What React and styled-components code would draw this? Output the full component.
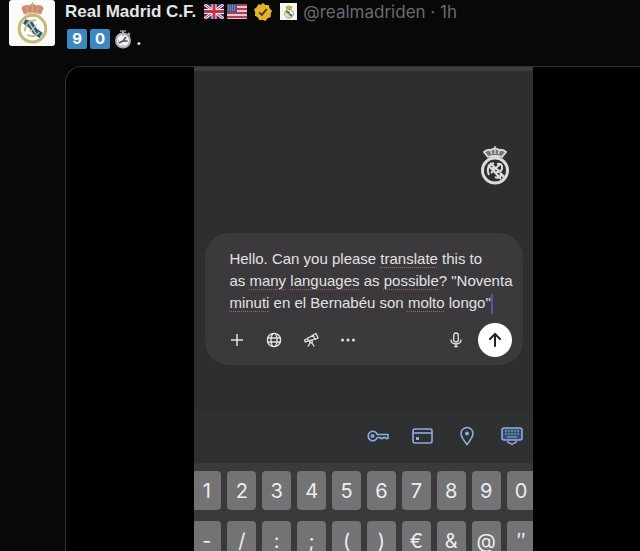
import React from 'react';
import styled, { createGlobalStyle } from 'styled-components';

const GlobalStyle = createGlobalStyle`
  * {
    box-sizing: border-box;
  }

  body {
    margin: 0;
    background: #080808;
    color: #e7e9ea;
    font-family: Inter, 'Liberation Sans', sans-serif;
  }

  button {
    margin: 0;
    padding: 0;
    border: 0;
    background: none;
    color: inherit;
    font-family: inherit;
    cursor: pointer;
  }

  svg {
    display: block;
    flex: none;
  }
`;

const S = {
  Post: styled.article`
    display: flex;
    gap: 10px;
    height: 100vh;
    padding-left: 9px;
    overflow: hidden;
  `,
  Avatar: styled.a`
    display: flex;
    flex: none;
    align-items: center;
    justify-content: center;
    width: 46px;
    height: 46px;
    border-radius: 3px;
    background: #fbfbf8;
  `,
  Body: styled.div`
    display: flex;
    flex: 1;
    flex-direction: column;
    min-width: 0;
    margin-right: -22px;
  `,
  Header: styled.header`
    display: flex;
    align-items: center;
    height: 23px;
    font-size: 17px;
    white-space: nowrap;
  `,
  Name: styled.a`
    color: #e4e5e6;
    font-family: 'Liberation Sans', sans-serif;
    font-weight: 700;
    text-decoration: none;
  `,
  Flags: styled.span`
    display: flex;
    gap: 3px;
    margin: 0 7px 0 8px;
  `,
  Affiliate: styled.span`
    display: flex;
    align-items: center;
    justify-content: center;
    width: 17px;
    height: 17px;
    margin: 0 6px 0 8px;
    background: #f6f6ee;
  `,
  Meta: styled.a`
    color: #686b6f;
    text-decoration: none;
  `,
  Message: styled.div`
    display: flex;
    align-items: center;
    gap: 3px;
    height: 31px;
    margin-bottom: 12px;
    padding-left: 2px;
    font-size: 17px;
    font-weight: 700;
  `,
  Keycap: styled.span`
    display: flex;
    align-items: center;
    justify-content: center;
    width: 20px;
    height: 20px;
    border-radius: 2px;
    background: #3b88c3;
    color: #fff;
    font-size: 15px;
  `,
  Media: styled.div`
    display: flex;
    flex: 1;
    justify-content: center;
    min-height: 0;
    border: 1px solid #2f3336;
    border-bottom: 0;
    border-radius: 16px 16px 0 0;
    background: #000;
    overflow: hidden;
  `,
  Phone: styled.section`
    display: flex;
    flex: 0 0 calc(57% - 1px);
    flex-direction: column;
    border-top: 4px solid #3e3f41;
    background: #2f2d30;
    overflow: hidden;
  `,
  Chat: styled.div`
    display: flex;
    flex: none;
    flex-direction: column;
    padding: 75px 10px 47px 11px;
  `,
  CrestRow: styled.div`
    display: flex;
    justify-content: flex-end;
    margin-bottom: 48px;
    padding-right: 13px;
  `,
  Composer: styled.form`
    padding: 15px 11px 8px 24px;
    border-radius: 24px;
    background: #3b393c;
  `,
  Prompt: styled.div`
    color: #e2e1e3;
    font-family: 'Liberation Sans', sans-serif;
    font-size: 15px;
    line-height: 22px;
    white-space: nowrap;
    outline: none;
  `,
  Typo: styled.span`
    text-decoration: underline dotted #a2626c 1px;
    text-decoration-skip-ink: none;
    text-underline-offset: 3px;
  `,
  Caret: styled.span`
    display: inline-block;
    width: 2px;
    height: 20px;
    background: #5553a8;
    vertical-align: middle;
  `,
  Tools: styled.div`
    display: flex;
    align-items: center;
    gap: 21px;
    margin-top: 9px;
  `,
  Tool: styled.button`
    display: flex;
    align-items: center;
    justify-content: center;
    width: 16px;
    height: 16px;
    margin-left: ${(props) => (props.$end ? 'auto' : '0')};
    color: #e4e3e5;
  `,
  Send: styled.button`
    display: flex;
    align-items: center;
    justify-content: center;
    width: 34px;
    height: 34px;
    margin-left: -7px;
    border-radius: 50%;
    background: #fff;
    color: #202022;
  `,
  Autofill: styled.div`
    display: flex;
    flex: none;
    align-items: center;
    justify-content: flex-end;
    gap: 23px;
    height: 51px;
    padding: 0 10px 4px 0;
    background: #2f3032;
  `,
  Fill: styled.button`
    color: #8caede;
  `,
  Keyboard: styled.div`
    display: grid;
    grid-template-columns: repeat(10, 1fr);
    grid-auto-rows: 39px;
    flex: none;
    gap: 11px 6px;
    margin: 0 -3px 0 -2px;
    padding-top: 8px;
    background: #3a393c;
  `,
  Key: styled.button`
    border-radius: 4px;
    background: #737275;
    color: #ededee;
    font-size: 20px;
    line-height: 20px;
  `,
};

const KEYS = [
  '1', '2', '3', '4', '5', '6', '7', '8', '9', '0',
  '-', '/', ':', ';', '(', ')', '€', '&', '@', '″',
];

const Crest = ({ size, gold, band, fill }) => (
  <svg width={size * 0.72} height={size} viewBox="0 0 36 50" fill="none">
    <path d="M8 14L5 7Q8 2 14 4Q18 0 22 4Q28 2 31 7L28 14Q18 11 8 14Z" fill={fill} />
    <path d="M8 14Q18 11 28 14M18 0V11M11 5L13 12M25 5L23 12" stroke={gold} strokeWidth="1.500" />
    <circle cx="18" cy="31" r="15.500" stroke={gold} strokeWidth="3.500" />
    <path d="M7 25L10 20L18 23L23 31L30 36L26 42L19 37L14 30Z" fill={band} />
    <path d="M9 34Q10 21 22 21M12 38Q20 43 26 35" stroke={gold} strokeWidth="2" />
    <path d="M14 24L22 37M23 26L15 35" stroke="#d9cf9c" strokeWidth="1.500" />
  </svg>
);

const WhiteCrest = () => (
  <svg width="30" height="39" viewBox="0 0 30 39" fill="none" stroke="#dcdbdd">
    <path d="M8 11L4 6Q7 3 11 4Q15 1 19 4Q23 3 26 6L22 11Q15 9 8 11Z" fill="#77767a" strokeWidth="1.800" />
    <path d="M15 0V8M10 4L12 8M20 4L18 8" strokeWidth="1.300" />
    <circle cx="15" cy="24.500" r="12.500" strokeWidth="3" />
    <path d="M8 19L21 33M9 29Q5 20 14 17M17 18Q23 17 22 23Q20 27 14 26" strokeWidth="2" />
    <path d="M10 17L20 26M20 18L11 27M12 22H17M15 31Q19 33 21 29" strokeWidth="2" />
    <path d="M20 27L24 31" strokeWidth="2.500" />
  </svg>
);

const UkFlag = () => (
  <svg width="20" height="15" viewBox="0 0 20 15" role="img" aria-label="United Kingdom">
    <rect width="20" height="15" rx="1" fill="#26366f" />
    <path d="M0 0L20 15M20 0L0 15" stroke="#eee" strokeWidth="3" />
    <path d="M0 0L20 15M20 0L0 15" stroke="#c52d45" strokeWidth="1" />
    <path d="M10 0V15M0 7.500H20" stroke="#eee" strokeWidth="5" />
    <path d="M10 0V15M0 7.500H20" stroke="#cf2b42" strokeWidth="3" />
  </svg>
);

const UsFlag = () => (
  <svg width="20" height="15" viewBox="0 0 20 15" role="img" aria-label="United States">
    <rect width="20" height="15" rx="1" fill="#d8cdd1" />
    <path d="M0 1H20M0 5H20M0 9H20M0 13H20" stroke="#b63a50" strokeWidth="2" />
    <rect width="10" height="8" fill="#4a568b" />
    <path d="M1 2H9M1 4H9M1 6H9" stroke="#a4aac6" strokeWidth="1" strokeDasharray="1 1" />
  </svg>
);

const GoldBadge = () => (
  <svg width="18" height="18" viewBox="0 0 22 22" role="img" aria-label="Verified">
    <path
      fill="#e2b32b"
      d="M11 0L14 2.500L18 2.500L19 6.500L22 9.500L20.500 13L20.500 17L16.500 18.500L14 22L10.500 20.500L6.500 21L4.500 17.500L1 15.500L1.500 11.500L0 7.500L3.500 5L5 1.500L8.500 2Z"
    />
    <path d="M6.500 11.500L9.700 14.500L15.500 7.500" fill="none" stroke="#4f3b0c" strokeWidth="2.400" />
  </svg>
);

const Stopwatch = () => (
  <svg width="20" height="20" viewBox="-1 0 20 20" role="img" aria-label="Stopwatch">
    <path d="M6 1H12V3H6Z" fill="#66757f" />
    <path d="M9 2V5M14 4L16 6" stroke="#99aab5" strokeWidth="2" />
    <circle cx="9" cy="11.500" r="7" fill="#f1f1f1" stroke="#a7b0b6" strokeWidth="2" />
    <path d="M9 6V7M4 12H5M13 12H14M9 16V17" stroke="#66757f" />
    <path d="M5 14L9 12L12 8M9 12H13" fill="none" stroke="#4f4549" strokeWidth="1.500" />
  </svg>
);

const Plus = () => (
  <svg width="14" height="14" viewBox="0 0 14 14" stroke="currentColor" strokeWidth="1.500">
    <path d="M7 1V13M1 7H13" />
  </svg>
);

const Globe = () => (
  <svg width="16" height="16" viewBox="0 0 16 16" fill="none" stroke="currentColor" strokeWidth="1.400">
    <circle cx="8" cy="8" r="6.600" />
    <ellipse cx="8" cy="8" rx="3" ry="6.600" />
    <path d="M1.500 6H14.500M1.500 10H14.500" />
  </svg>
);

const Telescope = () => (
  <svg width="16" height="16" viewBox="0 0 16 16" fill="none" stroke="currentColor" strokeWidth="1.300" strokeLinejoin="round">
    <path d="M10 3L13 1.500L15 6L12 7.300ZM10 3.300L4.500 6.200L5.700 9.200L12 7M4.500 6.500L1.500 8L2.300 10L5.500 8.800" />
    <circle cx="8" cy="9.500" r="1.300" />
    <path d="M7.300 10.500L5 14.500M8.700 10.500L11.300 14.500" />
  </svg>
);

const Dots = () => (
  <svg width="16" height="4" viewBox="0 0 16 4" fill="currentColor">
    <circle cx="2.500" cy="2" r="1.500" />
    <circle cx="8" cy="2" r="1.500" />
    <circle cx="13.500" cy="2" r="1.500" />
  </svg>
);

const Mic = () => (
  <svg width="14" height="16" viewBox="0 0 14 16" fill="none" stroke="currentColor" strokeWidth="1.300">
    <rect x="4.700" y="1" width="4.600" height="9" rx="2.300" />
    <path d="M2 7.500Q2 12 7 12Q12 12 12 7.500M7 12V15M5 14.700H9" />
  </svg>
);

const ArrowUp = () => (
  <svg width="16" height="16" viewBox="0 0 16 16" fill="none" stroke="currentColor" strokeWidth="2" strokeLinecap="round">
    <path d="M8 14V2M3 7L8 2L13 7" />
  </svg>
);

const KeyIcon = () => (
  <svg width="22" height="14" viewBox="0 0 22 14" fill="none" stroke="currentColor" strokeWidth="1.600" strokeLinejoin="round">
    <path d="M10.300 5.500H21V9.500H18.500V8.500H16V9.500H13.500V8.500H10.300A4.700 4.700 0 1 1 10.300 5.500Z" />
    <circle cx="5.500" cy="7" r="1.300" />
  </svg>
);

const CardIcon = () => (
  <svg width="21" height="16" viewBox="0 0 21 16" fill="none" stroke="currentColor" strokeWidth="1.600">
    <rect x="1" y="1" width="19" height="14" rx="2" />
    <path d="M1 5H20" />
    <path d="M4 10.500H7" strokeWidth="3" />
  </svg>
);

const PinIcon = () => (
  <svg width="22" height="20" viewBox="0 0 22 20" fill="none" stroke="currentColor" strokeWidth="1.600">
    <path d="M11 18.500Q5 11 5 7.500A6 6 0 0 1 17 7.500Q17 11 11 18.500Z" />
    <circle cx="11" cy="7.500" r="2" fill="currentColor" stroke="none" />
  </svg>
);

const KeyboardIcon = () => (
  <svg width="22" height="20" viewBox="0 0 22 20" fill="none" stroke="currentColor" strokeWidth="1.500">
    <path d="M3 2H19Q21 2 21 4V12Q21 14 19 14H3Q1 14 1 12V4Q1 2 3 2Z" fill="#3a4d70" />
    <path d="M4 5H18M4 8H18" strokeWidth="1" strokeDasharray="2 1" />
    <path d="M6 11H16" strokeWidth="1" />
    <path d="M6 15.500L11 18.500L16 15.500" />
  </svg>
);

const App = () => {
  return (
    <>
      <GlobalStyle />
      <S.Post>
        <S.Avatar href="#profile" aria-label="Real Madrid C.F.">
          <Crest size={43} gold="#c4b978" band="#245b86" fill="#d98277" />
        </S.Avatar>
        <S.Body>
          <S.Header>
            <S.Name href="#profile">Real Madrid C.F.</S.Name>
            <S.Flags>
              <UkFlag />
              <UsFlag />
            </S.Flags>
            <GoldBadge />
            <S.Affiliate>
              <Crest size={14} gold="#9c9150" band="#245b58" fill="#cdb85d" />
            </S.Affiliate>
            <S.Meta href="#post">@realmadriden · 1h</S.Meta>
          </S.Header>
          <S.Message>
            <S.Keycap>9</S.Keycap>
            <S.Keycap>0</S.Keycap>
            <Stopwatch />
            <span>.</span>
          </S.Message>
          <S.Media>
            <S.Phone>
              <S.Chat>
                <S.CrestRow>
                  <WhiteCrest />
                </S.CrestRow>
                <S.Composer onSubmit={(e) => e.preventDefault()}>
                  <S.Prompt
                    role="textbox"
                    aria-label="Message"
                    aria-multiline="true"
                    contentEditable
                    suppressContentEditableWarning
                    spellCheck={false}
                  >
                    Hello. Can you please <S.Typo>translate</S.Typo> this to
                    <br />
                    as <S.Typo>many</S.Typo> <S.Typo>languages</S.Typo> as{' '}
                    <S.Typo>possible</S.Typo>? "Noventa
                    <br />
                    <S.Typo>minuti</S.Typo> en el Bernabéu son{' '}
                    <S.Typo>molto</S.Typo> longo"
                    <S.Caret />
                  </S.Prompt>
                  <S.Tools>
                    <S.Tool type="button" aria-label="Add">
                      <Plus />
                    </S.Tool>
                    <S.Tool type="button" aria-label="Search the web">
                      <Globe />
                    </S.Tool>
                    <S.Tool type="button" aria-label="Research">
                      <Telescope />
                    </S.Tool>
                    <S.Tool type="button" aria-label="More">
                      <Dots />
                    </S.Tool>
                    <S.Tool type="button" aria-label="Dictate" $end>
                      <Mic />
                    </S.Tool>
                    <S.Send type="submit" aria-label="Send">
                      <ArrowUp />
                    </S.Send>
                  </S.Tools>
                </S.Composer>
              </S.Chat>
              <S.Autofill>
                <S.Fill aria-label="Passwords">
                  <KeyIcon />
                </S.Fill>
                <S.Fill aria-label="Cards">
                  <CardIcon />
                </S.Fill>
                <S.Fill aria-label="Addresses">
                  <PinIcon />
                </S.Fill>
                <S.Fill aria-label="Keyboard">
                  <KeyboardIcon />
                </S.Fill>
              </S.Autofill>
              <S.Keyboard>
                {KEYS.map((key) => (
                  <S.Key key={key}>{key}</S.Key>
                ))}
              </S.Keyboard>
            </S.Phone>
          </S.Media>
        </S.Body>
      </S.Post>
    </>
  );
};

export default App;
